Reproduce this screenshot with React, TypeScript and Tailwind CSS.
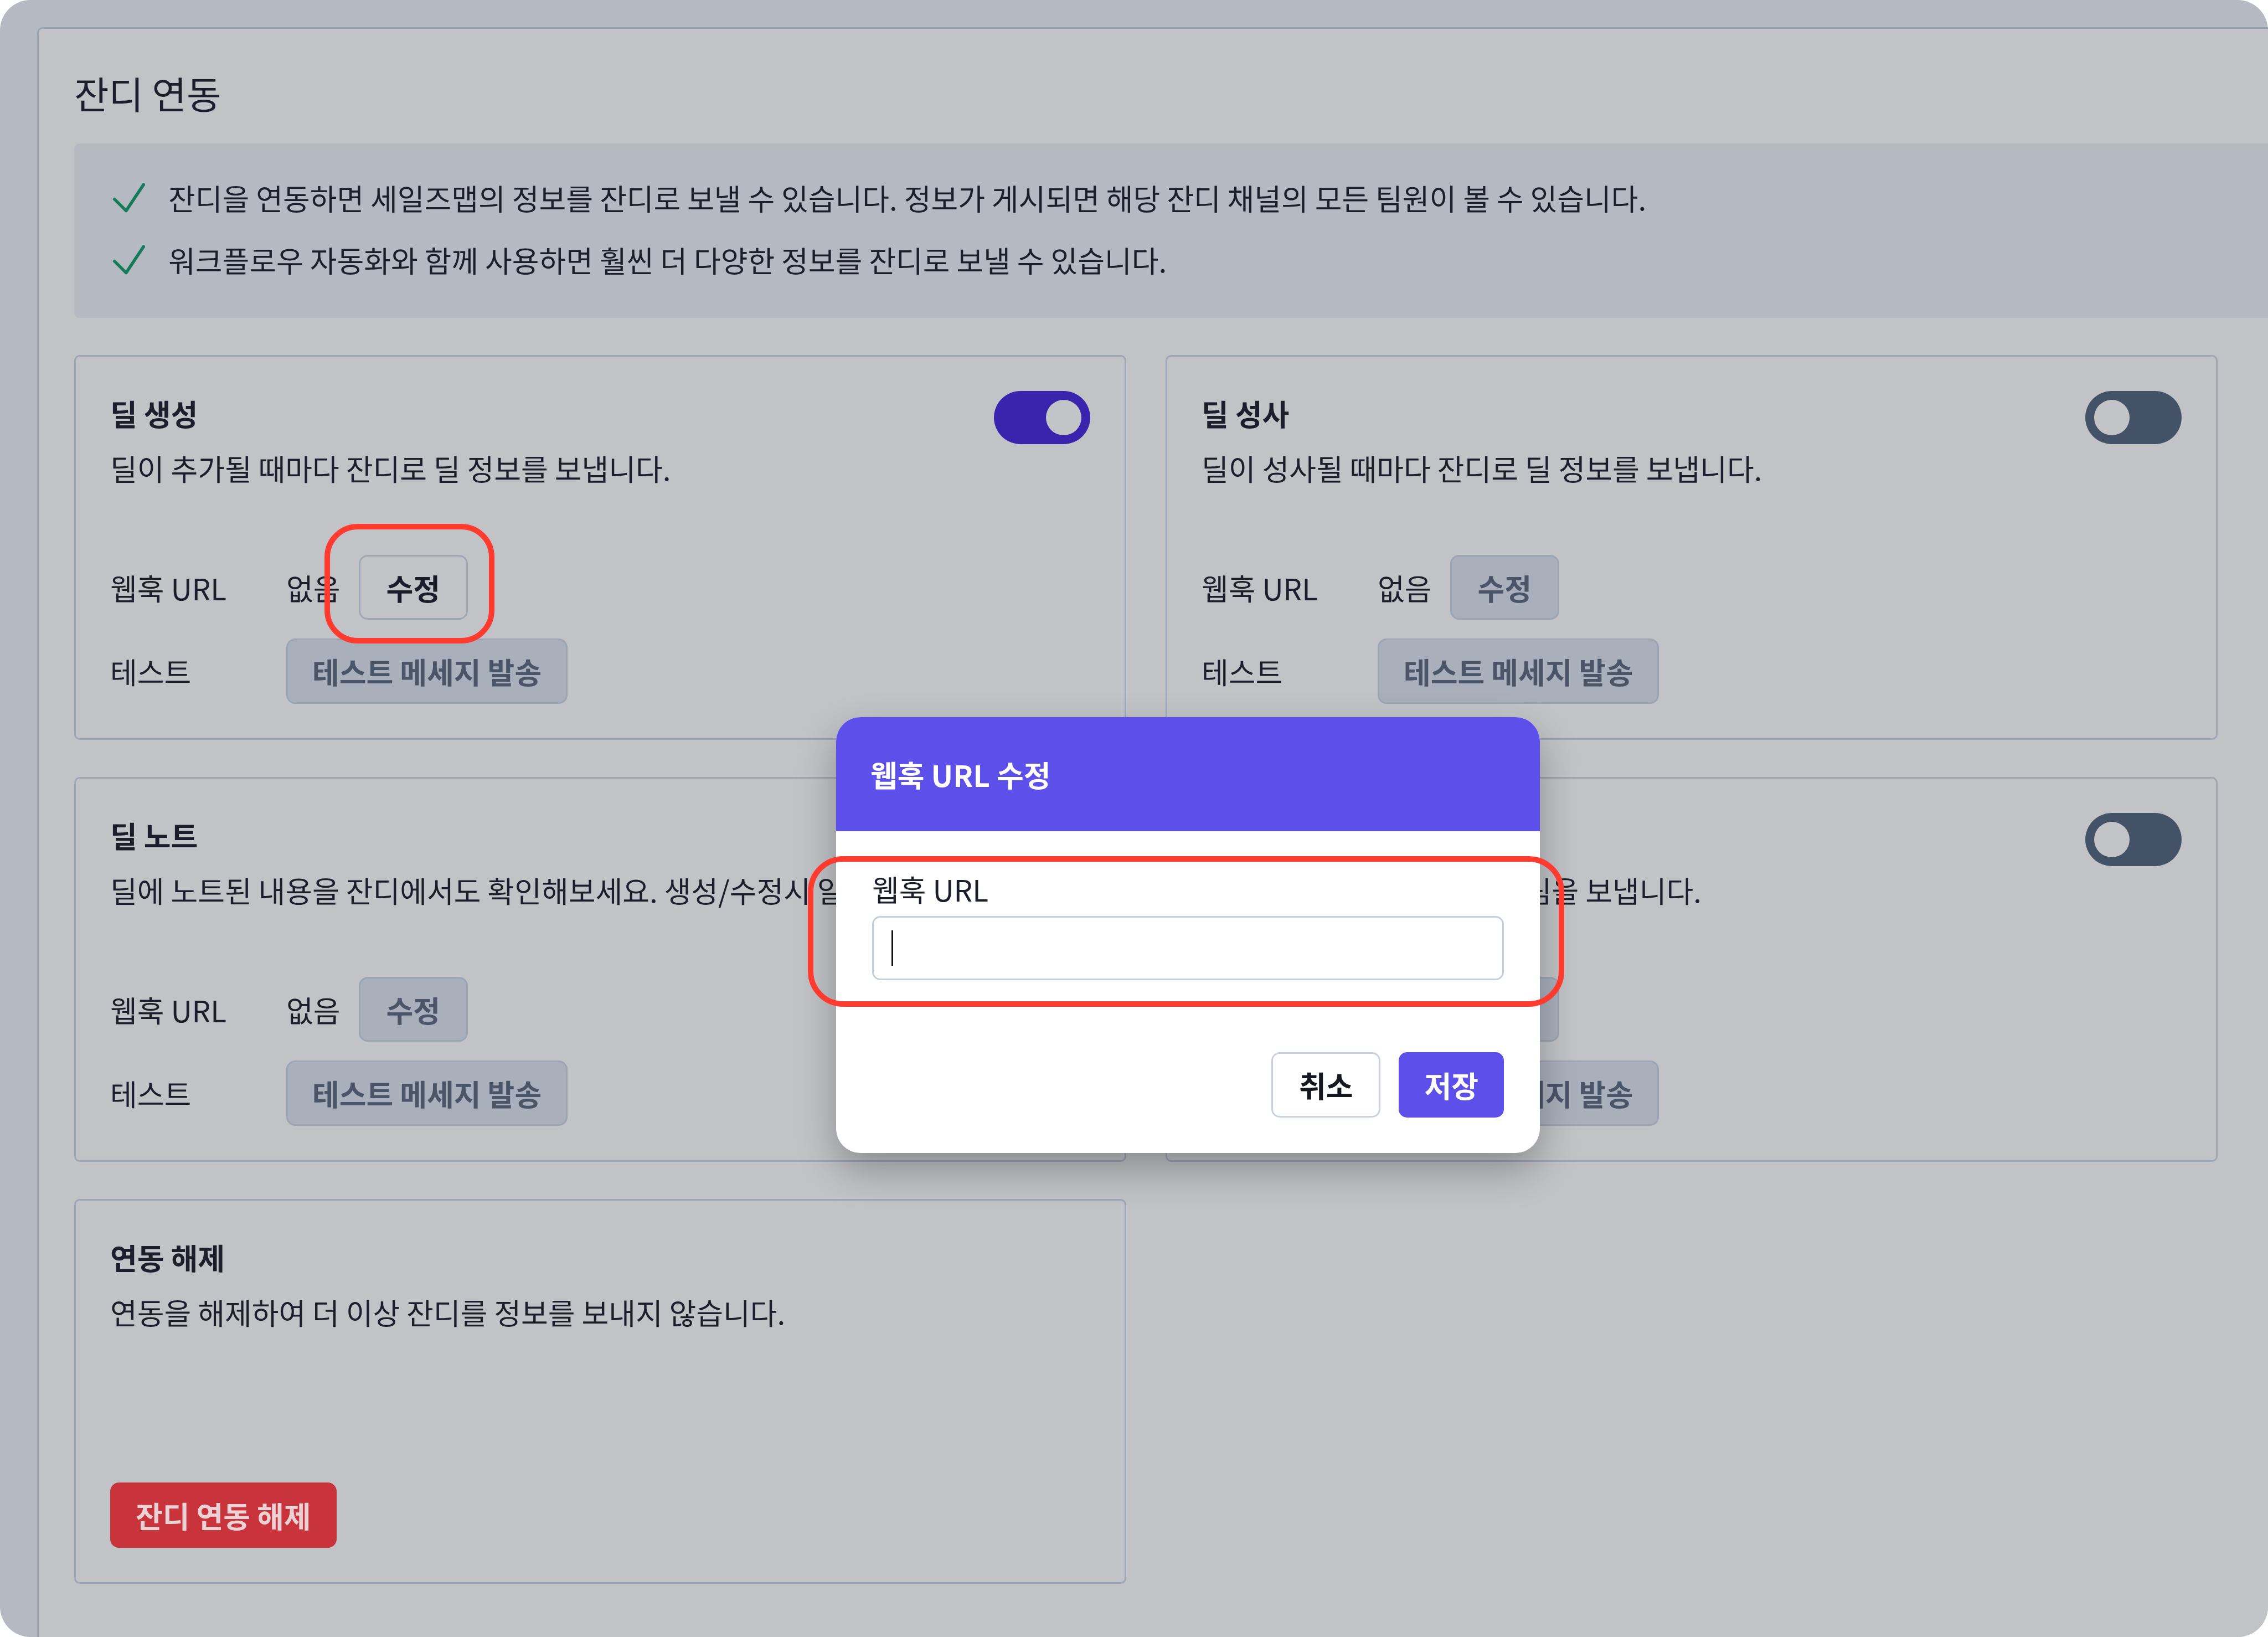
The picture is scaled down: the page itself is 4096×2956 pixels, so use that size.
import React from 'react';

const Check = () => (
  <svg viewBox="0 0 24 24" className="w-[84px] h-[84px] shrink-0" fill="none" stroke="#137a5a" strokeWidth={1.6} strokeLinecap="round" strokeLinejoin="round">
    <path d="M4.5 12.75l6 6 9-13.5" />
  </svg>
);

const Toggle = ({ on }: { on?: boolean }) => (
  <div className={`w-[174px] h-[96px] rounded-full p-[16px] flex shrink-0 ${on ? 'bg-[#3a23ad] justify-end' : 'bg-[#445268] justify-start'}`}>
    <div className="w-[64px] h-[64px] rounded-full bg-[#c3c4c8]" />
  </div>
);

type CardProps = {
  title: string;
  desc: string;
  on?: boolean;
  editActive?: boolean;
};

const IntegrationCard = ({ title, desc, on, editActive }: CardProps) => (
  <div className="border-[3px] border-[#9ea7b6] rounded-[10px] p-[62px] flex flex-col">
    <div className="flex justify-between items-start min-h-[96px]">
      <h3 className="pt-[4px] font-bold">{title}</h3>
      <Toggle on={on} />
    </div>
    <p className="mt-[7px] whitespace-nowrap">{desc}</p>
    <div className="mt-[121px] grid grid-cols-[318px_1fr] gap-y-[34px] items-center">
      <span>웹훅 URL</span>
      <div className="flex items-center gap-[33px]">
        <span>없음</span>
        {editActive ? (
          <button className="h-[117px] px-[47px] rounded-[16px] border-[3px] border-[#9ea7b6] font-bold text-[#1b1e2a]">
            수정
          </button>
        ) : (
          <button className="h-[117px] px-[47px] rounded-[16px] border-[3px] border-[#9ca5b4] bg-[#a9b0bc] font-bold text-[#4b5568]">
            수정
          </button>
        )}
      </div>
      <span>테스트</span>
      <div className="flex">
        <button className="h-[118px] px-[44px] rounded-[16px] border-[3px] border-[#9ca5b4] bg-[#a9b0bc] font-bold text-[#4b5568]">
          테스트 메세지 발송
        </button>
      </div>
    </div>
  </div>
);

const App = () => {
  return (
    <div className="w-[4096px] h-[2956px] bg-white font-['Noto_Sans_CJK_KR','Noto_Sans',sans-serif] text-[53px] leading-[72px] text-[#1c1f2b]">
      <div className="relative w-full h-full rounded-[55px] overflow-hidden bg-[#b5b9c2] pl-[67px] pt-[49px]">
        <section className="w-[4200px] h-[3000px] bg-[#c2c3c7] border-l-[3px] border-t-[3px] border-[#9aa3b3] rounded-tl-[10px] pl-[64px] pt-[62px]">
          <h1 className="text-[68px] leading-[108px]">잔디 연동</h1>

          <div className="mt-[37px] w-[4100px] bg-[#b5b9c2] rounded-[10px] pl-[57px] pt-[56px] pb-[63px] flex flex-col gap-[28px]">
            <div className="flex items-center gap-[29px]">
              <Check />
              <span>잔디을 연동하면 세일즈맵의 정보를 잔디로 보낼 수 있습니다. 정보가 게시되면 해당 잔디 채널의 모든 팀원이 볼 수 있습니다.</span>
            </div>
            <div className="flex items-center gap-[29px]">
              <Check />
              <span>워크플로우 자동화와 함께 사용하면 훨씬 더 다양한 정보를 잔디로 보낼 수 있습니다.</span>
            </div>
          </div>

          <div className="mt-[67px] w-[3871px] grid grid-cols-2 gap-x-[71px] gap-y-[67px] auto-rows-fr">
            <IntegrationCard title="딜 생성" desc="딜이 추가될 때마다 잔디로 딜 정보를 보냅니다." on editActive />
            <IntegrationCard title="딜 성사" desc="딜이 성사될 때마다 잔디로 딜 정보를 보냅니다." />
            <IntegrationCard title="딜 노트" desc="딜에 노트된 내용을 잔디에서도 확인해보세요. 생성/수정시 알림을 보냅니다." />
            <IntegrationCard title="딜 단계 변경" desc="딜 단계가 바뀌면 잔디로 알림을 보냅니다." />

            <div className="border-[3px] border-[#9ea7b6] rounded-[10px] p-[62px] flex flex-col">
              <div className="min-h-[96px]">
                <h3 className="pt-[4px] font-bold">연동 해제</h3>
              </div>
              <p className="mt-[7px]">연동을 해제하여 더 이상 잔디를 정보를 보내지 않습니다.</p>
              <button className="mt-auto self-start h-[118px] px-[46px] rounded-[16px] bg-[#c8333c] font-bold text-[#ecd2d4]">
                잔디 연동 해제
              </button>
            </div>
          </div>
        </section>

        {/* modal */}
        <div className="absolute left-[1510px] top-[1295px] w-[1271px] rounded-[44px] overflow-hidden bg-white shadow-[0_30px_70px_rgba(0,0,0,0.28)]">
          <div className="h-[206px] bg-[#5d4fea] px-[62px] flex items-center text-white font-bold">웹훅 URL 수정</div>
          <div className="px-[65px] pt-[68px] pb-[64px]">
            <label className="block">웹훅 URL</label>
            <div className="mt-[13px] h-[116px] border-[3px] border-[#c5cfdc] rounded-[15px] pl-[32px] flex items-center">
              <span className="w-[3px] h-[64px] bg-[#111318]" />
            </div>
            <div className="mt-[130px] flex justify-end gap-[33px]">
              <button className="h-[118px] px-[47px] border-[3px] border-[#c8d2df] rounded-[15px] bg-white font-bold text-[#16181f]">
                취소
              </button>
              <button className="h-[118px] px-[46px] rounded-[15px] bg-[#5d4fea] font-bold text-white">저장</button>
            </div>
          </div>
        </div>

        {/* red highlight marks */}
        <div className="absolute left-[586px] top-[946px] w-[307px] h-[216px] rounded-[60px] border-[10px] border-[#ff3b30]" />
        <div className="absolute left-[1459px] top-[1546px] w-[1366px] h-[272px] rounded-[64px] border-[10px] border-[#ff3b30]" />
      </div>
    </div>
  );
};

export default App;
